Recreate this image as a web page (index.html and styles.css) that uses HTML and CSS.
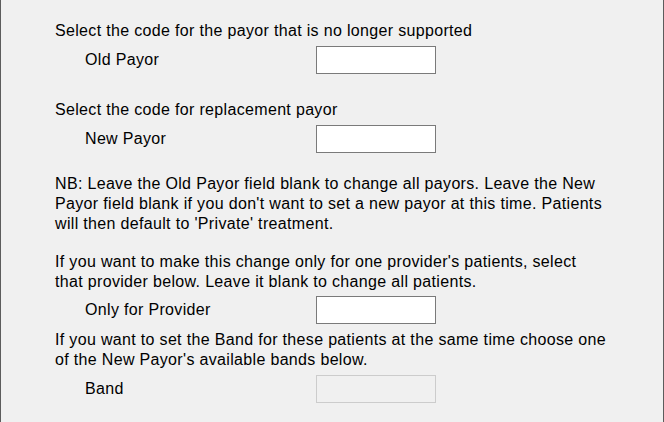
FILE: index.html
```html
<!DOCTYPE html>
<html lang="en">
<head>
  <meta charset="UTF-8" />
  <title>Change Payor</title>
  <link rel="stylesheet" href="styles.css">
</head>
<body>
  <div class="panel">
    <p class="intro first">Select the code for the payor that is no longer supported</p>
    <div class="row">
      <label class="label" for="oldPayor">Old Payor</label>
      <input class="field" id="oldPayor" />
    </div>

    <p class="intro second">Select the code for replacement payor</p>
    <div class="row">
      <label class="label" for="newPayor">New Payor</label>
      <input class="field" id="newPayor" />
    </div>

    <p class="intro note">NB: Leave the Old Payor field blank to change all payors. Leave the New<br>Payor field blank if you don't want to set a new payor at this time. Patients<br>will then default to 'Private' treatment.</p>

    <p class="intro provider">If you want to make this change only for one provider's patients, select<br>that provider below. Leave it blank to change all patients.</p>
    <div class="row tight">
      <label class="label" for="provider">Only for Provider</label>
      <input class="field" id="provider" />
    </div>

    <p class="intro band">If you want to set the Band for these patients at the same time choose one<br>of the New Payor's available bands below.</p>
    <div class="row">
      <label class="label" for="band">Band</label>
      <input class="field" id="band" disabled />
    </div>
  </div>
</body>
</html>
```

FILE: styles.css
```css
html, body {
  margin: 0;
  padding: 0;
  background: #f0f0f0;
}
.panel {
  box-sizing: border-box;
  height: 422px;
  border-left: 1px solid #5c5c5c;
  border-right: 1px solid #5c5c5c;
  padding: 21px 0 0 54px;
  font-family: "Liberation Sans", Arial, sans-serif;
  font-size: 16px;
  letter-spacing: 0.33px;
  line-height: 20px;
  color: #000;
}
.intro {
  margin: 0;
  white-space: nowrap;
}
.second { margin-top: 26px; }
.note { margin-top: 21px; }
.provider { margin-top: 18px; }
.band { margin-top: 6px; }
.row {
  display: flex;
  align-items: center;
  margin-top: 5px;
  padding-left: 30px;
}
.row.tight { margin-top: 4px; }
.label {
  width: 231px;
}
.field {
  box-sizing: border-box;
  width: 120px;
  height: 28px;
  margin: 0;
  border: 1px solid #7a7a7a;
  background: #fff;
  font: inherit;
  padding: 0 4px;
  outline: none;
}
.field:disabled {
  border-color: #cccccc;
  background: #f0f0f0;
}
```
